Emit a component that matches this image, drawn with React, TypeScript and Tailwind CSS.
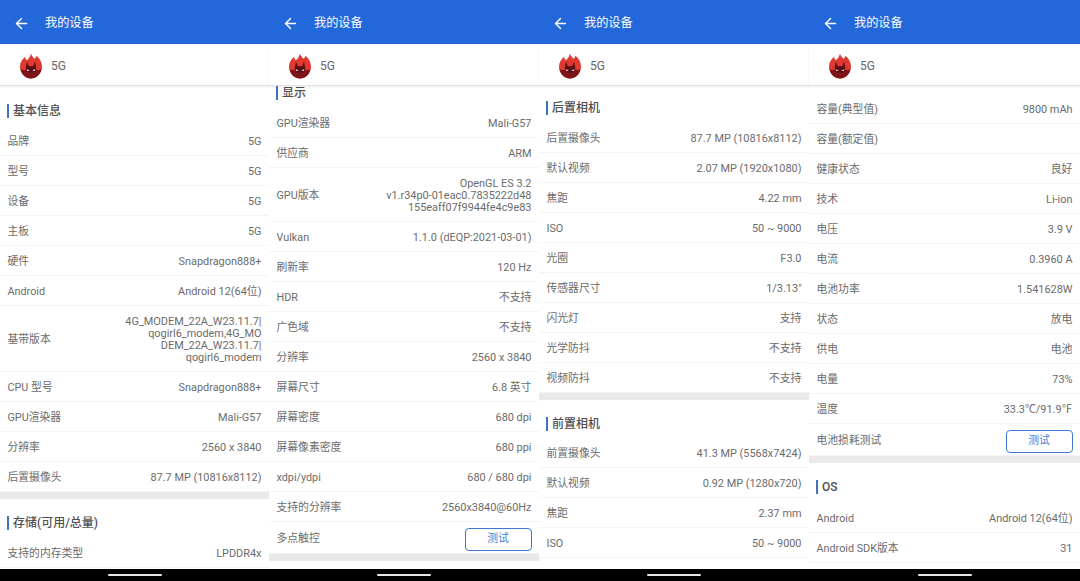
import React from "react";
import { ArrowLeft } from "lucide-react";

type Row = { label: string; value?: string; button?: boolean; h?: string };
type Block = { title?: string; titleClass?: string; rows: Row[]; band?: boolean };

function Logo() {
  return (
    <svg width="24" height="26" viewBox="0 0 24 26" className="shrink-0">
      <path d="M12 .5c.8 2.500 2 4 3.500 5.200 1-.7 1.600-1.700 1.900-2.900 3 2.500 5.600 6.200 5.600 10.700C23 20 18 25.500 12 25.500S1 20 1 13.500C1 9.500 3.300 6.300 6 3.800c.3 1.600.9 2.600 1.900 3.400C9.600 5.700 11.500 3.500 12 .5z" fill="#de3a30" />
      <path d="M1.500 16c2.500 1.500 5.500 1 10.500 1s8 .5 10.500-1c-1 5.500-5.300 9.500-10.500 9.500S2.500 21.500 1.500 16z" fill="#7b1519" />
      <path d="M8 8.500l1.800 4.700h4.400L16 8.500l1.400 7.500-2.900 3.500h-5L6.600 16z" fill="#5a0f14" />
      <path d="M7.800 16l3 1.800-2.500.2zM16.200 16l-3 1.800 2.500.2z" fill="#f6dcd6" />
    </svg>
  );
}

function Section({ title, titleClass, rows, band }: Block) {
  return (
    <div>
      {title && (
        <div className={`flex items-center pl-[7px] ${titleClass ?? "h-[40px]"}`}>
          <span className="mr-[4px] h-[14px] w-[2px] bg-[#3f72bd]" />
          <span className="text-[12px] leading-none font-medium text-[#505050]">{title}</span>
        </div>
      )}
      {rows.map((r) => (
        <div
          key={r.label}
          className={`flex items-center justify-between border-b border-[#f4f4f4] px-[7.5px] pt-[3px] text-[10.8px] leading-[12px] text-[#6b6b6b] ${r.h ?? "h-[30px]"}`}
        >
          <span className="shrink-0">{r.label}</span>
          {r.button ? (
            <span className="flex h-[23px] w-[67px] items-center justify-center rounded-[4px] border-[1.5px] border-[#3f78d0] text-[#4a82d8]">
              测试
            </span>
          ) : (
            <span className="text-right text-[10.9px] whitespace-pre-line">{r.value}</span>
          )}
        </div>
      ))}
      {band && <div className="h-[7px] bg-[#e9e9e9]" />}
    </div>
  );
}

function Panel({ width, shift, blocks }: { width: string; shift: string; blocks: Block[] }) {
  return (
    <div className={`flex h-[581px] flex-col bg-white ${width}`}>
      <div className="flex h-[44px] shrink-0 items-center bg-[#2368da] pt-[3px] pl-[13px] text-white">
        <ArrowLeft size={17} strokeWidth={2} />
        <span className="ml-[15px] text-[12.2px] leading-none">我的设备</span>
      </div>
      <div className="z-10 flex h-[42px] shrink-0 items-center gap-[8px] border-b border-[#e4e4e4] bg-white pt-[2px] pl-[19px] text-[12px] leading-none text-[#666] shadow-[0_1px_2px_rgba(0,0,0,0.08)]">
        <Logo />
        <span>5G</span>
      </div>
      <div className="min-h-0 flex-1 overflow-hidden">
        <div className={shift}>
          {blocks.map((b, i) => (
            <Section key={i} {...b} />
          ))}
        </div>
      </div>
      <div className="flex h-[12px] shrink-0 items-center justify-center bg-black">
        <span className="h-[2px] w-[54px] rounded-full bg-[#e8e8e8]" />
      </div>
    </div>
  );
}

const one: Block[] = [
  {
    title: "基本信息",
    titleClass: "h-[40px] pt-[10px]",
    band: true,
    rows: [
      { label: "品牌", value: "5G" },
      { label: "型号", value: "5G" },
      { label: "设备", value: "5G" },
      { label: "主板", value: "5G" },
      { label: "硬件", value: "Snapdragon888+" },
      { label: "Android", value: "Android 12(64位)" },
      {
        label: "基带版本",
        value: "4G_MODEM_22A_W23.11.7|\nqogirl6_modem,4G_MO\nDEM_22A_W23.11.7|\nqogirl6_modem",
        h: "h-[66px]",
      },
      { label: "CPU 型号", value: "Snapdragon888+" },
      { label: "GPU渲染器", value: "Mali-G57" },
      { label: "分辨率", value: "2560 x 3840" },
      { label: "后置摄像头", value: "87.7 MP (10816x8112)" },
    ],
  },
  {
    title: "存储(可用/总量)",
    titleClass: "h-[39px] pt-[9px]",
    rows: [{ label: "支持的内存类型", value: "LPDDR4x" }],
  },
];

const two: Block[] = [
  {
    title: "显示",
    titleClass: "h-[32px] pt-[2px]",
    band: true,
    rows: [
      { label: "GPU渲染器", value: "Mali-G57" },
      { label: "供应商", value: "ARM" },
      {
        label: "GPU版本",
        value: "OpenGL ES 3.2\nv1.r34p0-01eac0.7835222d48\n155eaff07f9944fe4c9e83",
        h: "h-[54px]",
      },
      { label: "Vulkan", value: "1.1.0 (dEQP:2021-03-01)" },
      { label: "刷新率", value: "120 Hz" },
      { label: "HDR", value: "不支持" },
      { label: "广色域", value: "不支持" },
      { label: "分辨率", value: "2560 x 3840" },
      { label: "屏幕尺寸", value: "6.8 英寸" },
      { label: "屏幕密度", value: "680 dpi" },
      { label: "屏幕像素密度", value: "680 ppi" },
      { label: "xdpi/ydpi", value: "680 / 680 dpi" },
      { label: "支持的分辨率", value: "2560x3840@60Hz" },
      { label: "多点触控", button: true, h: "h-[32px]" },
    ],
  },
];

const three: Block[] = [
  {
    title: "后置相机",
    titleClass: "h-[37px] pt-[7px]",
    band: true,
    rows: [
      { label: "后置摄像头", value: "87.7 MP (10816x8112)" },
      { label: "默认视频", value: "2.07 MP (1920x1080)" },
      { label: "焦距", value: "4.22 mm" },
      { label: "ISO", value: "50 ~ 9000" },
      { label: "光圈", value: "F3.0" },
      { label: "传感器尺寸", value: '1/3.13"' },
      { label: "闪光灯", value: "支持" },
      { label: "光学防抖", value: "不支持" },
      { label: "视频防抖", value: "不支持" },
    ],
  },
  {
    title: "前置相机",
    titleClass: "h-[38px] pt-[10px]",
    rows: [
      { label: "前置摄像头", value: "41.3 MP (5568x7424)" },
      { label: "默认视频", value: "0.92 MP (1280x720)" },
      { label: "焦距", value: "2.37 mm" },
      { label: "ISO", value: "50 ~ 9000" },
    ],
  },
];

const four: Block[] = [
  {
    band: true,
    rows: [
      { label: "容量(典型值)", value: "9800 mAh" },
      { label: "容量(额定值)", value: "" },
      { label: "健康状态", value: "良好" },
      { label: "技术", value: "Li-ion" },
      { label: "电压", value: "3.9 V" },
      { label: "电流", value: "0.3960 A" },
      { label: "电池功率", value: "1.541628W" },
      { label: "状态", value: "放电" },
      { label: "供电", value: "电池" },
      { label: "电量", value: "73%" },
      { label: "温度", value: "33.3℃/91.9℉" },
      { label: "电池损耗测试", button: true, h: "h-[32px]" },
    ],
  },
  {
    title: "OS",
    titleClass: "h-[40px] pt-[8px]",
    rows: [
      { label: "Android", value: "Android 12(64位)" },
      { label: "Android SDK版本", value: "31" },
    ],
  },
];

export default function App() {
  return (
    <div className="flex h-[581px] w-[1080px] overflow-hidden bg-white font-['Roboto','Noto_Sans_CJK_SC',sans-serif]">
      <Panel width="w-[269px]" shift="" blocks={one} />
      <Panel width="w-[270px]" shift="mt-[-10px]" blocks={two} />
      <Panel width="w-[270px]" shift="" blocks={three} />
      <Panel width="w-[271px]" shift="mt-[8px]" blocks={four} />
    </div>
  );
}
